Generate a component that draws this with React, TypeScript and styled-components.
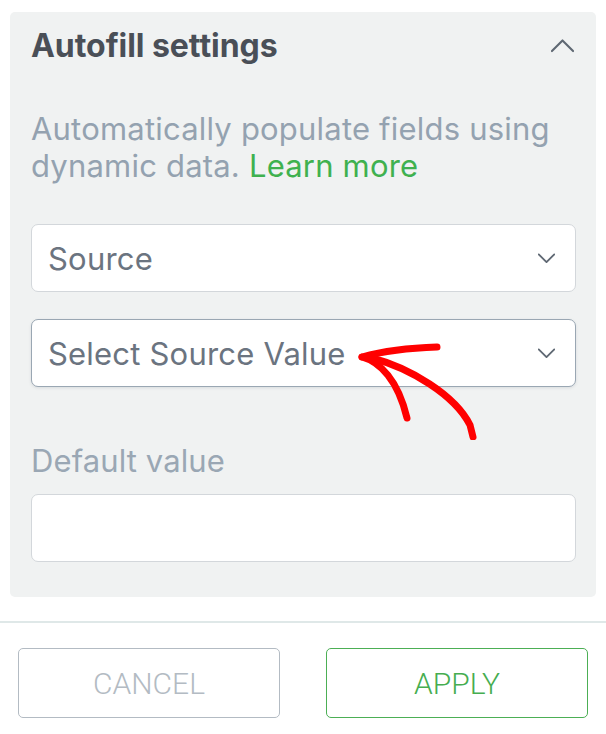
import * as React from "react";
import styled, { createGlobalStyle } from "styled-components";

const GlobalStyle = createGlobalStyle`
  body {
    margin: 0;
    background: #ffffff;
    font-family: Inter, "Noto Sans", sans-serif;
  }
`;

const Chevron: React.FC<{ up?: boolean; size: number }> = ({ up, size }) => (
  <svg width={size} height={size / 2 + 2} viewBox="0 0 24 13" fill="none">
    <path
      d={up ? "M1 12 L12 1 L23 12" : "M1 1 L12 12 L23 1"}
      stroke="#5f6873"
      strokeWidth={up ? 2.2 : 2.6}
      strokeLinecap="round"
      strokeLinejoin="round"
    />
  </svg>
);

const Arrow = () => (
  <ArrowSvg width="130" height="100" viewBox="350 340 130 100">
    <g stroke="#ff0000" strokeWidth="7" strokeLinecap="round" fill="none">
      <path d="M362 357 C380 352 405 348 437 347" />
      <path d="M362 357 C380 362 398 380 407 418" />
      <path d="M372 358 C410 368 455 395 470 425 L473 437" />
    </g>
  </ArrowSvg>
);

export default function App() {
  return (
    <>
      <GlobalStyle />
      <Page>
        <Panel>
          <Header>
            <Title>Autofill settings</Title>
            <Chevron up size={23} />
          </Header>
          <Description>
            Automatically populate fields using dynamic data. <Link href="#">Learn more</Link>
          </Description>
          <Fields>
            <Select>
              <SelectText>Source</SelectText>
              <Chevron size={17} />
            </Select>
            <Select active>
              <SelectText>Select Source Value</SelectText>
              <Chevron size={17} />
            </Select>
          </Fields>
          <Label>Default value</Label>
          <Input />
          <Arrow />
        </Panel>
        <Divider />
        <Actions>
          <Button>CANCEL</Button>
          <Button primary>APPLY</Button>
        </Actions>
      </Page>
    </>
  );
}

const Page = styled.div`
  width: 606px;
  padding-top: 12px;
`;

const Panel = styled.section`
  position: relative;
  margin: 0 10px;
  background: #f0f2f2;
  border-radius: 5px;
  padding: 0 20px 35px 21px;
`;

const Header = styled.div`
  display: flex;
  align-items: center;
  justify-content: space-between;
  height: 68px;
  padding-right: 2px;
`;

const Title = styled.h2`
  margin: 0;
  font-size: 32px;
  line-height: 40px;
  font-weight: 700;
  color: #4a4f57;
  letter-spacing: -0.05px;
`;

const Description = styled.p`
  margin: 30px 0 0;
  font-size: 31px;
  line-height: 37px;
  color: #94a2b0;
  letter-spacing: 0.2px;
`;

const Link = styled.a`
  color: #3fb14f;
  text-decoration: none;
`;

const Fields = styled.div`
  display: flex;
  flex-direction: column;
  gap: 27px;
  margin-top: 40px;
`;

const Select = styled.div<{ active?: boolean }>`
  display: flex;
  align-items: center;
  justify-content: space-between;
  height: 68px;
  box-sizing: border-box;
  padding: 0 20px 0 16px;
  background: #ffffff;
  border-radius: 7px;
  border: 1.5px solid ${(p) => (p.active ? "#9aa7b3" : "#d3d7db")};
  box-shadow: ${(p) => (p.active ? "0 1px 3px rgba(80, 95, 110, 0.15)" : "none")};
`;

const SelectText = styled.span`
  font-size: 31px;
  line-height: 37px;
  color: #6b7480;
  letter-spacing: 0.2px;
`;

const Label = styled.div`
  margin-top: 55px;
  font-size: 31px;
  line-height: 37px;
  color: #9aa7b4;
  letter-spacing: 0.1px;
`;

const Input = styled.div`
  margin-top: 15px;
  height: 68px;
  box-sizing: border-box;
  background: #ffffff;
  border: 1.5px solid #d3d7db;
  border-radius: 7px;
`;

const ArrowSvg = styled.svg`
  position: absolute;
  left: 340px;
  top: 328px;
  pointer-events: none;
`;

const Divider = styled.hr`
  margin: 24px 0 0;
  border: none;
  height: 2px;
  background: #dfe8e8;
`;

const Actions = styled.div`
  display: grid;
  grid-template-columns: 262px 262px;
  justify-content: space-between;
  padding: 25px 18px 0;
`;

const Button = styled.button<{ primary?: boolean }>`
  height: 70px;
  background: #ffffff;
  border-radius: 5px;
  border: 1.5px solid ${(p) => (p.primary ? "#4caf55" : "#b3bbc3")};
  color: ${(p) => (p.primary ? "#46ad50" : "#b3bbc3")};
  font-family: Roboto, "Noto Sans", sans-serif;
  font-size: 30px;
  font-weight: 300;
`;
